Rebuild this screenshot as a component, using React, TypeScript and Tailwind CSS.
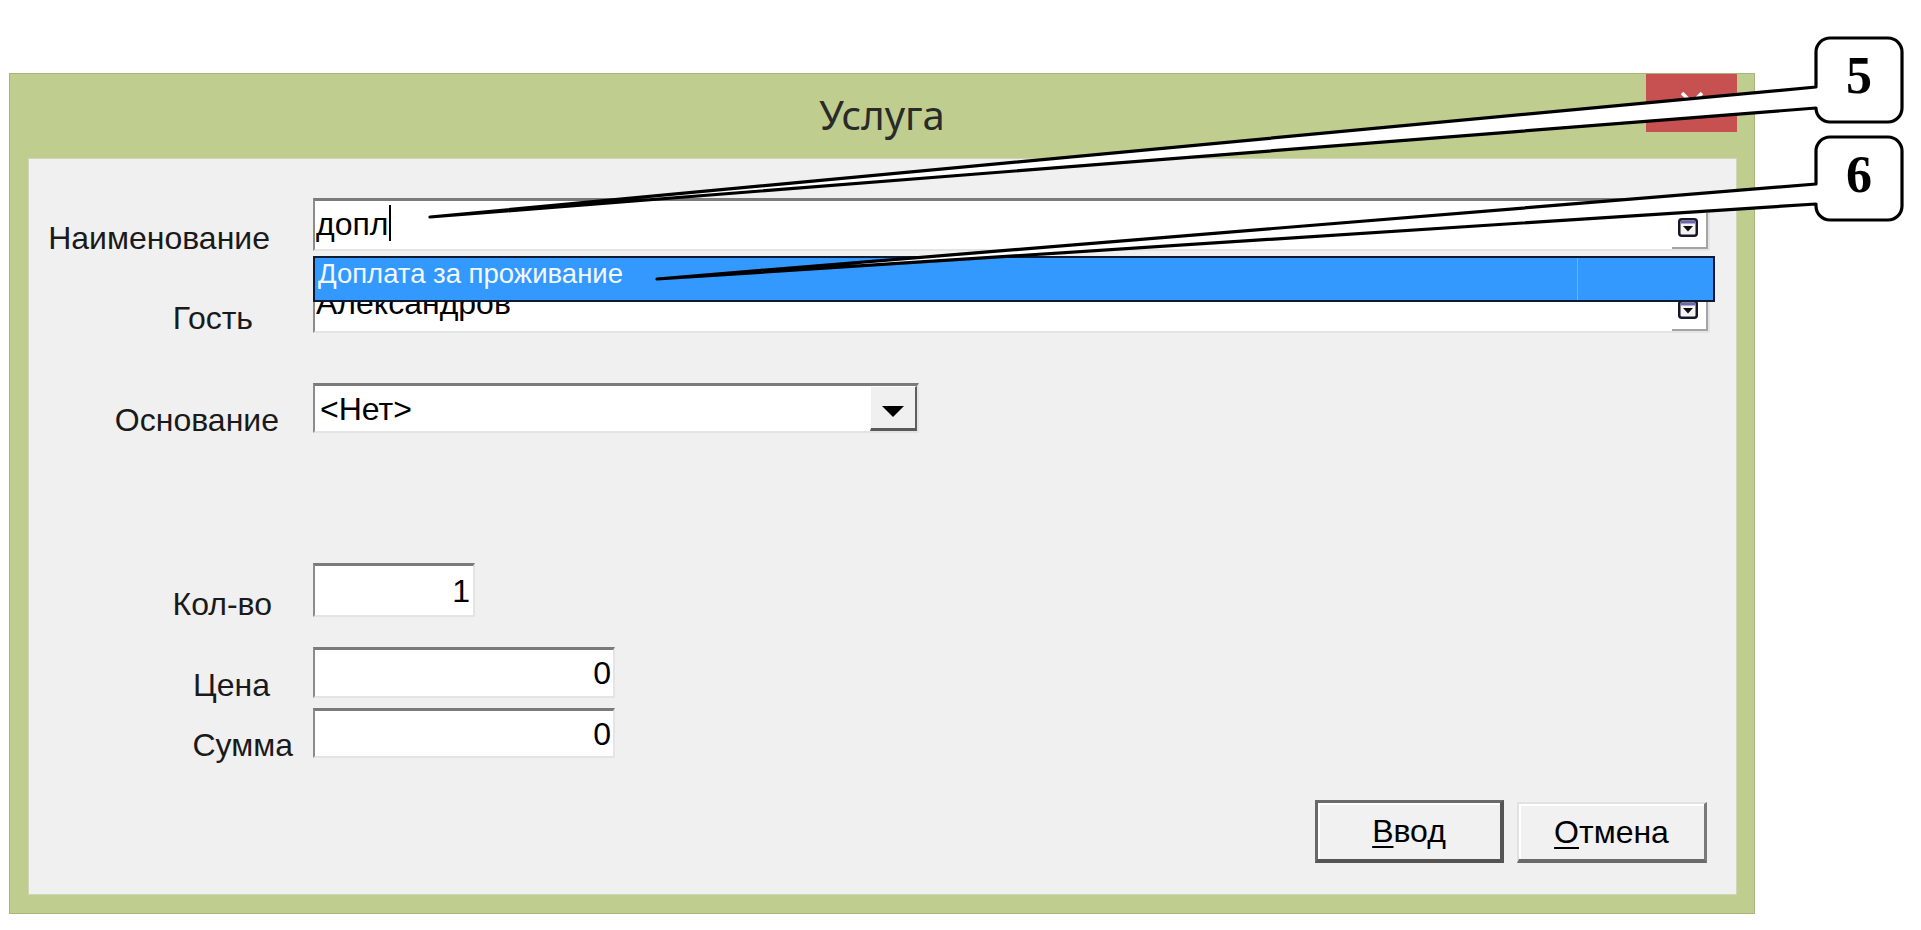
import React from "react";

const sunken =
  "bg-white border-t-[3px] border-l-2 border-r-2 border-b-2 border-t-[#7b7b7b] border-l-[#8c8c8c] border-r-[#e4e4e4] border-b-[#e4e4e4]";

const txt = "inline-block whitespace-nowrap text-[32px] leading-[32px]";

function Row({
  label,
  labelCls,
  rowCls,
  children,
}: {
  label: string;
  labelCls: string;
  rowCls: string;
  children: React.ReactNode;
}) {
  return (
    <div className={`flex ${rowCls}`}>
      <div className={`w-[284px] shrink-0 flex justify-end ${labelCls}`}>
        <span className={`${txt} text-[#1a1a1a]`}>{label}</span>
      </div>
      {children}
    </div>
  );
}

function DropIcon() {
  return (
    <svg width="20" height="19" viewBox="0 0 20 19">
      <rect x="1.25" y="1.25" width="17.5" height="16.5" rx="2.5" fill="#f4f4f4" stroke="#16162a" strokeWidth="2.5" />
      <rect x="3" y="3" width="14" height="2.5" fill="#6a66b0" />
      <path d="M5 8 H15 L10 13.5 Z" fill="#0d0d0d" />
    </svg>
  );
}

function DropBtn() {
  return (
    <div className="ml-auto self-end w-[36px] h-[36px] border-r-2 border-b-2 border-[#a4a4a4] flex items-start justify-start pl-[6px] pt-[5px]">
      <DropIcon />
    </div>
  );
}

function Callouts() {
  return (
    <svg
      className="absolute left-0 top-0 z-20 pointer-events-none"
      width="1921"
      height="930"
      viewBox="0 0 1921 930"
    >
      <path
        d="M1816 184 V151 A14 14 0 0 1 1830 137 H1888 A14 14 0 0 1 1902 151 V206 A14 14 0 0 1 1888 220 H1830 A14 14 0 0 1 1816 206 V204 L657 279 Z"
        fill="#ffffff"
        stroke="#000000"
        strokeWidth="3.2"
        strokeLinejoin="round"
      />
      <path
        d="M1816 87 V52 A14 14 0 0 1 1830 38 H1888 A14 14 0 0 1 1902 52 V108 A14 14 0 0 1 1888 122 H1830 A14 14 0 0 1 1816 108 L430 217 Z"
        fill="#ffffff"
        stroke="#000000"
        strokeWidth="3.2"
        strokeLinejoin="round"
      />
      <text
        x="1859"
        y="93"
        textAnchor="middle"
        fontFamily="'Liberation Serif', 'Times New Roman', serif"
        fontWeight="bold"
        fontSize="52"
        fill="#000"
      >
        5
      </text>
      <text
        x="1859"
        y="192"
        textAnchor="middle"
        fontFamily="'Liberation Serif', 'Times New Roman', serif"
        fontWeight="bold"
        fontSize="52"
        fill="#000"
      >
        6
      </text>
    </svg>
  );
}

export default function App() {
  return (
    <div className="relative w-[1921px] h-[930px] overflow-hidden bg-white font-['Liberation_Sans',Arial,sans-serif] text-black">
      <div className="pt-[73px] pl-[9px]">
        {/* window */}
        <div className="w-[1746px] h-[841px] bg-[#bfcd8f] border border-[#a7b77a] flex flex-col">
          {/* title bar */}
          <div className="relative h-[84px] shrink-0 flex items-center justify-center">
            <span className="font-['Noto_Sans',sans-serif] text-[40px] leading-none text-[#2a2a2a] pb-[2px]">
              Услуга
            </span>
            <div className="absolute top-0 right-[17px] w-[91px] h-[58px] bg-[#c75050] flex items-center justify-center">
              <svg width="26" height="24" viewBox="0 0 26 24">
                <path d="M3 2 L23 22 M23 2 L3 22" stroke="#ffffff" strokeWidth="3.5" />
              </svg>
            </div>
          </div>

          {/* client panel */}
          <div className="mr-[17px] ml-[18px] mb-[18px] flex-1 bg-[#f0f0f0] border border-[#cfd6b8] flex flex-col">
            {/* Наименование */}
            <Row label="Наименование" labelCls="pt-[24px] pr-[43px]" rowCls="mt-[39px] h-[53px]">
              <div className={`relative w-[1397px] h-[53px] flex ${sunken}`}>
                <div className="flex items-start pt-[7px] pl-[1px]">
                  <span className={txt}>допл</span>
                </div>
                <div className="self-start mt-[4px] ml-[1px] w-[2px] h-[36px] bg-black" />
                <DropBtn />
                {/* dropdown list */}
                <div className="absolute left-[-2px] top-[55px] w-[1402px] h-[46px] bg-[#3399ff] border-2 border-[#0e1a33] flex items-start pt-[2px] pl-[3px] z-10">
                  <span className="inline-block whitespace-nowrap text-[27.5px] leading-[28px] text-[#f4f8ff]">
                    Доплата за проживание
                  </span>
                  <div className="absolute left-[1262px] top-0 bottom-0 w-px bg-[#68b4ff]" />
                </div>
              </div>
            </Row>

            {/* Гость */}
            <Row label="Гость" labelCls="pt-[21px] pr-[60px]" rowCls="mt-[30px] h-[52px]">
              <div className={`w-[1397px] h-[52px] flex ${sunken}`}>
                <div className="flex items-start pt-[3px] pl-[1px]">
                  <span className={txt}>Александров</span>
                </div>
                <DropBtn />
              </div>
            </Row>

            {/* Основание */}
            <Row label="Основание" labelCls="pt-[21px] pr-[34px]" rowCls="mt-[50px] h-[50px]">
              <div className={`w-[606px] h-[50px] flex ${sunken} border-r-0`}>
                <div className="flex items-center pl-[5px]">
                  <span className={txt}>&lt;Нет&gt;</span>
                </div>
                <div className="ml-auto w-[47px] h-[45px] bg-[#f0f0f0] border-t border-l border-t-[#ffffff] border-l-[#ffffff] border-r-2 border-b-[3px] border-r-[#5f5f5f] border-b-[#5a5a5a] flex items-start justify-center pt-[19px]">
                  <svg width="22" height="11" viewBox="0 0 22 11">
                    <path d="M0 0 H22 L11 11 Z" fill="#000" />
                  </svg>
                </div>
              </div>
            </Row>

            {/* Кол-во */}
            <Row label="Кол-во" labelCls="pt-[25px] pr-[41px]" rowCls="mt-[130px] h-[54px]">
              <div className={`w-[162px] h-[54px] flex items-center justify-end pr-[3px] ${sunken}`}>
                <span className={txt}>1</span>
              </div>
            </Row>

            {/* Цена */}
            <Row label="Цена" labelCls="pt-[22px] pr-[43px]" rowCls="mt-[30px] h-[51px]">
              <div className={`w-[302px] h-[51px] flex items-center justify-end pr-[2px] ${sunken}`}>
                <span className={txt}>0</span>
              </div>
            </Row>

            {/* Сумма */}
            <Row label="Сумма" labelCls="pt-[21px] pr-[20px]" rowCls="mt-[10px] h-[50px]">
              <div className={`w-[302px] h-[50px] flex items-center justify-end pr-[2px] ${sunken}`}>
                <span className={txt}>0</span>
              </div>
            </Row>

            {/* buttons */}
            <div className="mt-[42px] h-[63px] flex justify-end items-end gap-[13px] pr-[29px]">
              <button className="w-[189px] h-[63px] bg-[#f1f1f1] border-[3px] border-[#6a6a6a] border-r-4 border-b-4 border-r-[#545454] border-b-[#545454] shadow-[inset_2px_2px_0_#ffffff] flex items-center justify-center">
                <span className={txt}>
                  <span className="underline decoration-2 underline-offset-[4px]">В</span>вод
                </span>
              </button>
              <button className="w-[190px] h-[61px] bg-[#f1f1f1] border-t-2 border-l-2 border-t-[#e2e2e2] border-l-[#e2e2e2] border-r-[3px] border-b-4 border-r-[#7a7a7a] border-b-[#6a6a6a] shadow-[inset_2px_2px_0_#ffffff] flex items-center justify-center">
                <span className={txt}>
                  <span className="underline decoration-2 underline-offset-[4px]">О</span>тмена
                </span>
              </button>
            </div>
          </div>
        </div>
      </div>
      <Callouts />
    </div>
  );
}
